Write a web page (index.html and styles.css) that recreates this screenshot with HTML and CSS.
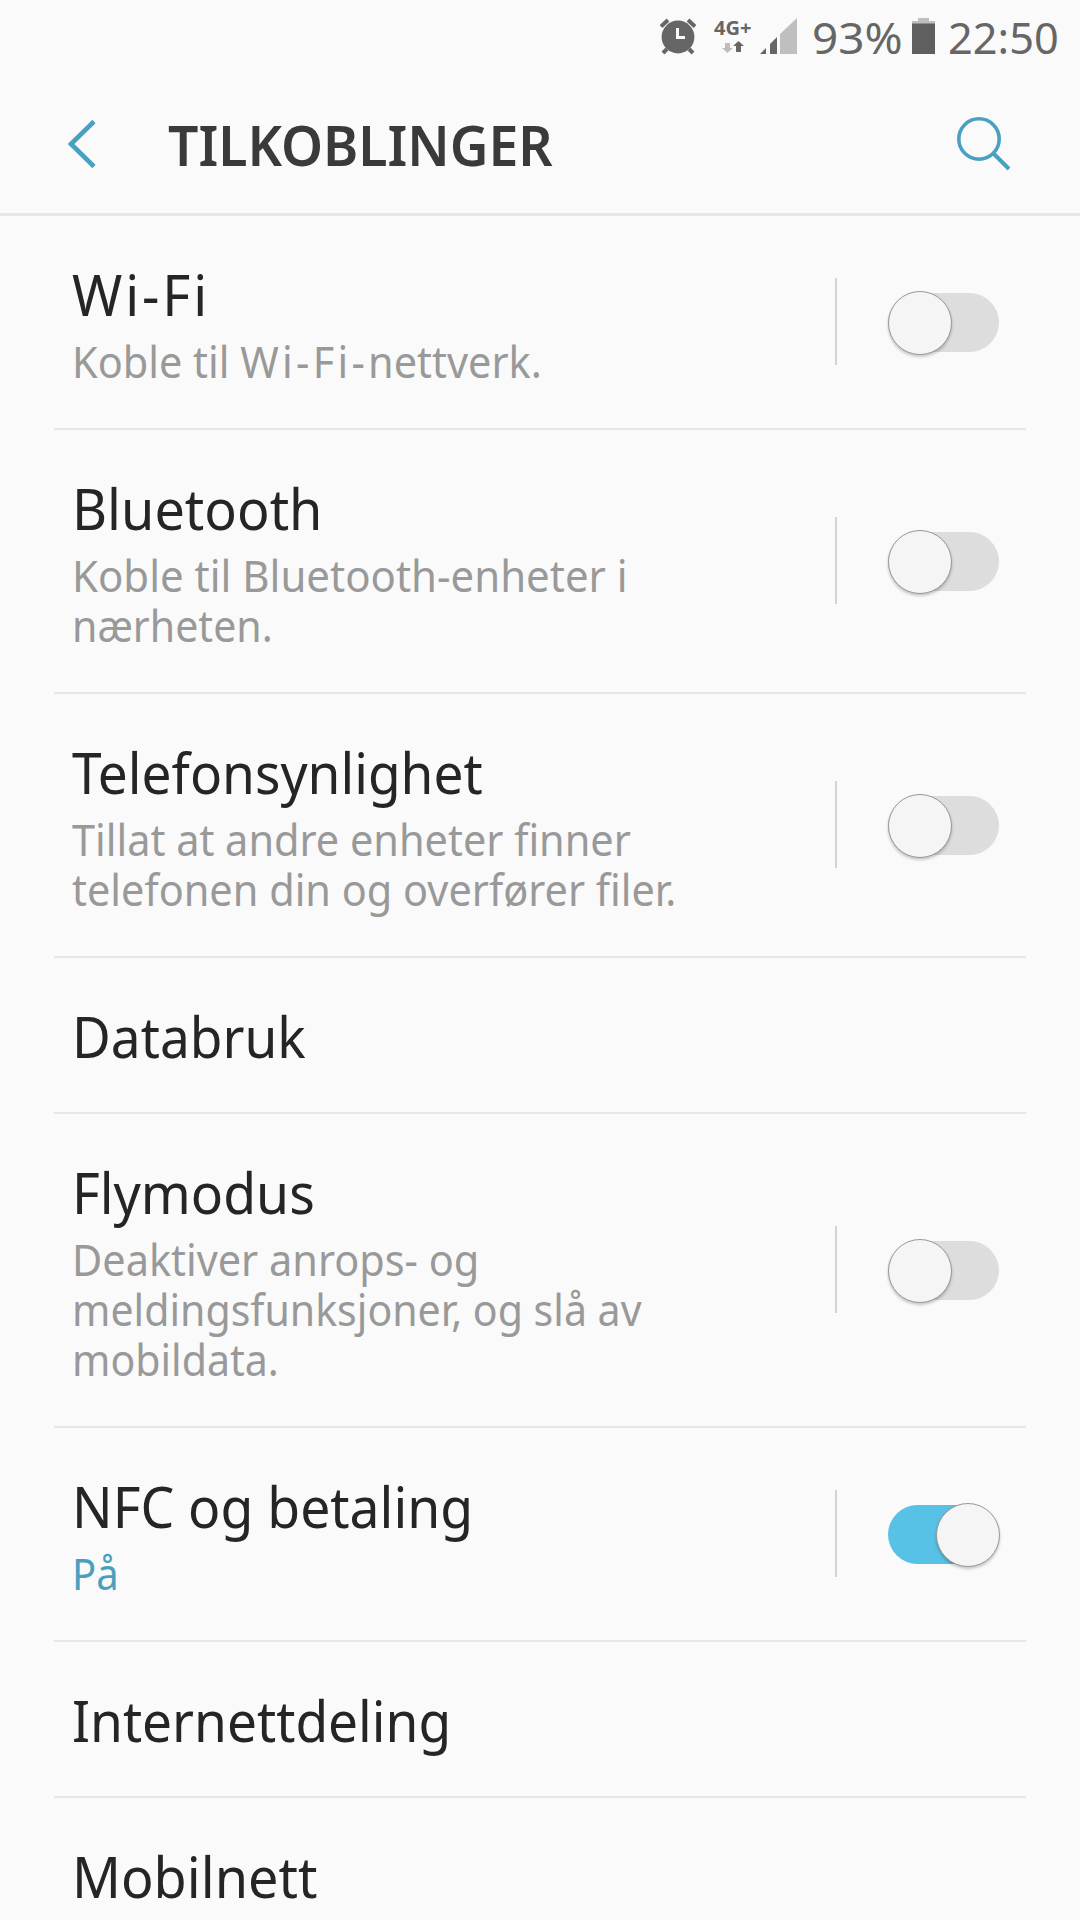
FILE: index.html
```html
<!DOCTYPE html>
<html lang="nb">
<head>
<meta charset="utf-8">
<title>Tilkoblinger</title>
<link rel="stylesheet" href="styles.css">
</head>
<body>
<header class="status">
  <svg class="alarm" width="36" height="37" viewBox="0 0 36 37">
    <circle cx="18" cy="19" r="16.4" fill="#666"/>
    <path d="M1 8.500 8 2M28 2l7 6.500M7 31l-4 4M29 31l4 4" fill="none" stroke="#666" stroke-width="4"/>
    <path d="M17.500 10v9.500h7.500" fill="none" stroke="#fafafa" stroke-width="3"/>
  </svg>
  <div class="network">
    <span class="network-name">4G+</span>
    <svg class="arrows" width="22" height="12" viewBox="0 0 22 12">
      <path d="M3 2h5v5h3l-5.500 5L0 7h3z" fill="#bdbdbd"/>
      <path d="M16.500 0 22 5h-3v6h-5V5h-3z" fill="#666"/>
    </svg>
  </div>
  <svg class="signal" width="37" height="36" viewBox="0 0 37 36">
    <path d="M0 36l6-6v6zM10 26l7-7v17H10z" fill="#666"/>
    <path d="M20 16 37 0v36H20z" fill="#bfbfbf"/>
  </svg>
  <span class="percent">93%</span>
  <svg class="battery" width="23" height="36" viewBox="0 0 23 36">
    <path d="M6 0h11v3h6v3H0V3h6z" fill="#bfbfbf"/>
    <path d="M0 5.500h23V36H0z" fill="#5f5f5f"/>
  </svg>
  <span class="clock">22:50</span>
</header>
<nav class="bar">
  <svg class="back" width="30" height="50" viewBox="0 0 30 50"><path d="M27 2.500 4 25l23 22.500" fill="none" stroke="#4aa0c0" stroke-width="4.600"/></svg>
  <h1 class="heading">TILKOBLINGER</h1>
  <svg class="search" width="54" height="54" viewBox="0 0 54 54"><path d="M37 37l15 15" stroke="#4aa0c0" stroke-width="4"/><circle cx="22" cy="22" r="20.200" fill="none" stroke="#4aa0c0" stroke-width="3.600"/></svg>
</nav>
<main class="list">
  <section class="row"><div class="text"><h2 class="title spaced">Wi-Fi</h2><p class="sub"><span class="line wide">Koble til <span class="wifi">Wi-Fi-</span>nettverk.</span></p></div><i class="rule"></i><span class="switch"></span></section>
  <section class="row"><div class="text"><h2 class="title wide">Bluetooth</h2><p class="sub"><span class="line wider">Koble til Bluetooth-enheter i</span><span class="line">nærheten.</span></p></div><i class="rule"></i><span class="switch"></span></section>
  <section class="row"><div class="text"><h2 class="title tight">Telefonsynlighet</h2><p class="sub"><span class="line wide">Tillat at andre enheter finner</span><span class="line wide">telefonen din og overfører filer.</span></p></div><i class="rule"></i><span class="switch"></span></section>
  <section class="row"><div class="text"><h2 class="title tight">Databruk</h2></div></section>
  <section class="row"><div class="text"><h2 class="title">Flymodus</h2><p class="sub"><span class="line wide">Deaktiver anrops- og</span><span class="line">meldingsfunksjoner, og slå av</span><span class="line">mobildata.</span></p></div><i class="rule"></i><span class="switch"></span></section>
  <section class="row"><div class="text"><h2 class="title">NFC og betaling</h2><p class="sub accent"><span class="line tightest">På</span></p></div><i class="rule"></i><span class="switch on"></span></section>
  <section class="row"><div class="text"><h2 class="title tight">Internettdeling</h2></div></section>
  <section class="row"><div class="text"><h2 class="title wide">Mobilnett</h2></div></section>
</main>
</body>
</html>
```
FILE: styles.css
```css
*, *::after { box-sizing: border-box; }
body { margin: 0; height: 1920px; overflow: hidden; background: #fafafa; color: #252525; font-family: "Noto Sans", sans-serif; }
h1, h2, p { margin: 0; font-weight: 400; }
svg { display: block; flex: none; }

.status { display: flex; align-items: flex-start; height: 76px; padding-left: 660px; color: #666; white-space: nowrap; }
.alarm { margin-top: 18px; }
.network { flex: none; width: 40px; margin: 16px 0 0 18px; }
.network-name { display: block; height: 23px; font-size: 20px; line-height: 23px; font-weight: 700; }
.arrows { margin: 2px 0 0 8px; }
.signal { margin: 18px 0 0 6px; }
.percent, .clock { display: block; flex: none; font-size: 44.500px; line-height: 60px; margin-top: 7px; transform-origin: 0 50%; }
.percent { width: 87px; margin-left: 15px; transform: scaleX(1.03); }
.battery { margin: 18px 0 0 13px; }
.clock { margin-left: 13px; transform: scaleX(.973); }

.bar { display: flex; align-items: flex-start; height: 140px; border-bottom: 3px solid #e6e6e6; }
.back { margin: 43px 0 0 67px; }
.heading { width: 788px; margin: 30px 0 0 71px; font-size: 56px; line-height: 76px; font-weight: 600; color: #3a3a3a; transform: scaleX(.955); transform-origin: 0 50%; }
.search { margin: 41px 0 0 1px; }

.row { display: flex; align-items: center; margin: 0 54px; padding: 41px 26px 39px 18px; border-bottom: 2px solid #e6e6e6; }
.text { width: 763px; white-space: nowrap; }
.title, .line { display: block; transform: scaleX(.955); transform-origin: 0 50%; }
.title { font-size: 56px; line-height: 74px; }
.sub { margin-top: 6px; padding-bottom: 2px; font-size: 43px; line-height: 50px; color: #999; }
.accent { color: #4a9fc0; }
.wifi { letter-spacing: 3.4px; }
.spaced { letter-spacing: 3px; transform: scaleX(.965); }
.tightest { transform: scaleX(.93); }
.tight { transform: scaleX(.95); }
.wide { transform: scaleX(.964); }
.wider { transform: scaleX(.976); }

.rule { flex: none; width: 2px; height: 87px; margin: -10px 0 -7px; background: #d3d3d3; }
.switch { flex: none; position: relative; width: 111px; height: 59px; margin: 0 0 1px 51px; border-radius: 30px; background: #ddd; }
.switch::after { content: ""; position: absolute; left: 0; top: -2px; width: 64px; height: 64px; border: 1px solid #999; border-radius: 50%; background: #f5f5f5; box-shadow: 0 2px 3px rgba(0,0,0,.22); }
.on { background: #58c1e6; }
.on::after { left: 48px; }
```
